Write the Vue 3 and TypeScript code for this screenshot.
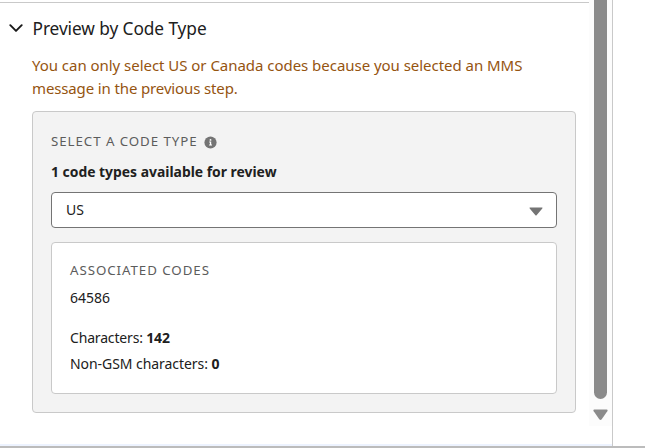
<script setup lang="ts">
import { ref } from 'vue'

interface CodeType {
  label: string
  code: string
  characters: number
  nonGsm: number
}

const codeTypes: CodeType[] = [
  { label: 'US', code: '64586', characters: 142, nonGsm: 0 },
]
const selected = ref<CodeType>(codeTypes[0])
const open = ref(true)
</script>

<template>
  <div class="window">
    <div class="content">
      <section class="section">
        <h2 class="heading" @click="open = !open">
          <svg class="chevron" width="14" height="9" viewBox="0 0 14 9">
            <path d="M1.3 1.2 L7 6.9 L12.7 1.2" fill="none" stroke="#181818" stroke-width="1.9" stroke-linecap="round" stroke-linejoin="round" />
          </svg>
          <span>Preview by Code Type</span>
        </h2>
        <div v-if="open" class="body">
          <p class="warning">
            <span class="line-a">You can only select US or Canada codes because you selected an MMS</span><br />
            <span class="line-b">message in the previous step.</span>
          </p>
          <div class="panel">
            <div class="label">
              <span class="caps">SELECT A CODE TYPE</span>
              <svg class="info" width="13" height="13" viewBox="0 0 13 13">
                <circle cx="6.5" cy="6.5" r="6.1" fill="#747474" />
                <circle cx="6.5" cy="3.9" r="0.95" fill="#fff" />
                <path d="M5.2 5.6 H7.2 V8.6 H8 V9.5 H5.1 V8.6 H5.9 V6.5 H5.2 Z" fill="#fff" />
              </svg>
            </div>
            <div class="available">{{ codeTypes.length }} code types available for review</div>
            <div class="select">
              <span>{{ selected.label }}</span>
              <svg width="14" height="9" viewBox="0 0 14 9">
                <path d="M1 0.4 H13 Q14 0.6 13.3 1.4 L7.6 8.2 Q7 8.9 6.4 8.2 L0.7 1.4 Q0 0.6 1 0.4 Z" fill="#747474" />
              </svg>
            </div>
            <div class="card">
              <div class="caps card-title">ASSOCIATED CODES</div>
              <div class="code">{{ selected.code }}</div>
              <div class="stat chars">Characters: <b>{{ selected.characters }}</b></div>
              <div class="stat gsm">Non-GSM characters: <b>{{ selected.nonGsm }}</b></div>
            </div>
          </div>
        </div>
      </section>
      <div class="scrollbar">
        <div class="thumb"></div>
        <svg width="15" height="12" viewBox="0 0 15 12">
          <path d="M1.4 0.4 H13.6 Q15.2 0.8 14.3 2.3 L8.9 10 Q7.5 11.8 6.1 10 L0.7 2.3 Q-0.2 0.8 1.4 0.4 Z" fill="#8b8b8b" />
        </svg>
      </div>
    </div>
    <div class="outside"></div>
  </div>
</template>

<style>
body {
  margin: 0;
  background: #fff;
}
</style>

<style scoped>
.window {
  box-sizing: border-box;
  width: 645px;
  height: 448px;
  display: flex;
  overflow: hidden;
  border-bottom: 2px solid #bcbcbc;
  font-family: 'Noto Sans', 'Open Sans', sans-serif;
  color: #202020;
  background: #fff;
}
.content {
  box-sizing: border-box;
  width: 613px;
  display: flex;
  align-items: flex-start;
  border-right: 1px solid #c9c9c9;
  box-shadow: inset 0 -2px #edf3ff;
}
.outside {
  flex: 1;
}
.section {
  box-sizing: border-box;
  width: 589px;
  margin-top: 2px;
  padding-right: 13px;
  border-top: 1px solid #c9c9c9;
}
.heading {
  display: flex;
  align-items: center;
  gap: 9.5px;
  height: 26px;
  margin: 12px 0 0 9px;
  font-size: 17.3px;
  font-weight: 400;
  letter-spacing: -0.08px;
  white-space: nowrap;
}
.chevron {
  flex: none;
}
.body {
  padding-left: 32px;
}
.warning {
  margin: 13px 0 0;
  font-size: 15px;
  line-height: 23px;
  color: #955410;
  white-space: nowrap;
}
.line-a {
  letter-spacing: -0.035px;
}
.line-b {
  letter-spacing: -0.13px;
}
.panel {
  box-sizing: border-box;
  height: 302px;
  margin-top: 11px;
  padding: 19px 18px 18px;
  border: 1px solid #c9c9c9;
  border-radius: 4px;
  background: #f3f3f3;
}
.label {
  display: flex;
  align-items: center;
  gap: 6px;
  height: 20px;
}
.caps {
  font-size: 13.3px;
  line-height: 20px;
  letter-spacing: 0.94px;
  color: #5c5c5c;
  white-space: nowrap;
}
.info {
  flex: none;
  margin-top: 2px;
}
.available {
  height: 20px;
  margin-top: 11px;
  font-size: 13.9px;
  font-weight: 700;
  line-height: 20px;
  white-space: nowrap;
}
.select {
  box-sizing: border-box;
  display: flex;
  align-items: center;
  justify-content: space-between;
  height: 36px;
  margin-top: 10px;
  padding: 0 13px 0 14px;
  border: 1px solid #747474;
  border-radius: 4px;
  background: #fff;
  font-size: 14px;
}
.select span {
  padding-bottom: 2px;
}
.select svg {
  margin-top: 3px;
}
.card {
  box-sizing: border-box;
  height: 152px;
  margin-top: 14px;
  padding: 17px 18px;
  border: 1px solid #c9c9c9;
  border-radius: 4px;
  background: #fff;
  font-size: 14px;
}
.code {
  height: 20px;
  margin-top: 8px;
  line-height: 20px;
}
.stat {
  height: 26px;
  line-height: 26px;
  white-space: nowrap;
}
.chars {
  margin-top: 17px;
  letter-spacing: -0.17px;
}
.gsm {
  letter-spacing: -0.06px;
}
.scrollbar {
  box-sizing: border-box;
  display: flex;
  flex-direction: column;
  align-items: center;
  gap: 10px;
  width: 23px;
  height: 426px;
  background: #fcfcfc;
}
.thumb {
  width: 13px;
  height: 399px;
  border-radius: 0 0 7px 7px;
  background: #8b8b8b;
}
</style>
